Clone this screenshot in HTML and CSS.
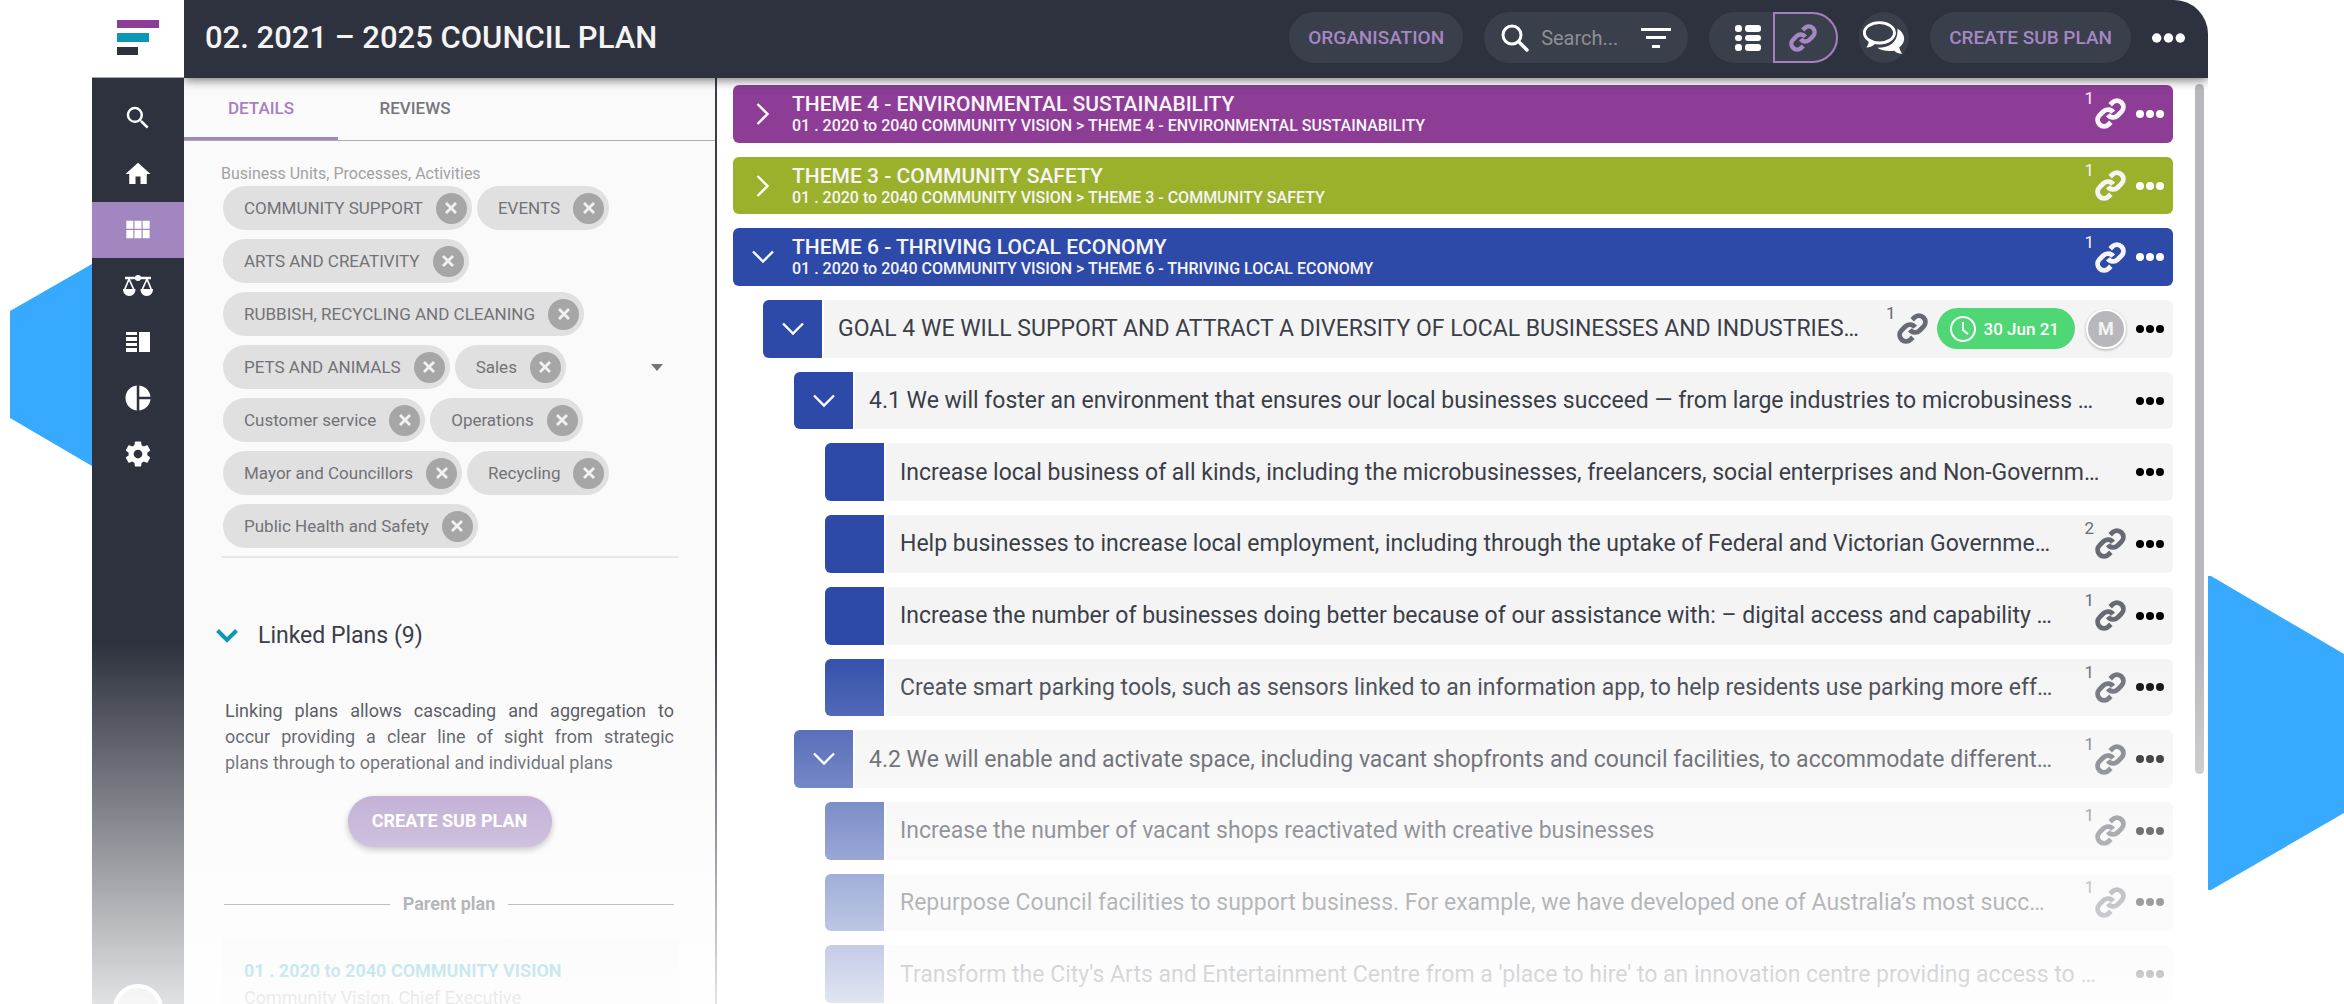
FILE: index.html
```html
<!DOCTYPE html>
<html lang="en">
<head>
  <meta charset="UTF-8">
  <meta name="viewport" content="width=device-width, initial-scale=1.0">
  <title>02. 2021 – 2025 Council Plan</title>
  <link rel="stylesheet" href="styles.css">
</head>
<body>
  <!-- shared icons -->
  <svg class="sprite" aria-hidden="true">
    <symbol id="i-link" viewBox="0 0 24 24"><path fill="none" stroke="currentColor" stroke-width="3.800" d="M10 13a5 5 0 0 0 7.540.54l3-3a5 5 0 0 0-7.070-7.070l-1.720 1.710M14 11a5 5 0 0 0-7.540-.54l-3 3a5 5 0 0 0 7.070 7.070l1.710-1.710"/></symbol>
    <symbol id="i-dots" viewBox="0 0 28 8"><g fill="currentColor"><circle cx="4" cy="4" r="4"/><circle cx="14" cy="4" r="4"/><circle cx="24" cy="4" r="4"/></g></symbol>
    <symbol id="i-down" viewBox="0 0 22 14"><path fill="none" stroke="currentColor" stroke-width="2.400" d="M1 1.500l10 10 10-10"/></symbol>
    <symbol id="i-right" viewBox="0 0 14 22"><path fill="none" stroke="currentColor" stroke-width="2.400" d="M1.500 1l10 10-10 10"/></symbol>
    <symbol id="i-close" viewBox="0 0 12 12"><path fill="none" stroke="currentColor" stroke-width="2.800" d="M1 1l10 10M11 1L1 11"/></symbol>
    <symbol id="i-search" viewBox="0 0 24 24"><path fill="currentColor" d="M15.500 14h-.79l-.28-.27A6.471 6.471 0 0 0 16 9.500 6.500 6.500 0 1 0 9.500 16c1.610 0 3.090-.59 4.230-1.570l.27.28v.79l5 4.990L20.490 19l-4.990-5zm-6 0C7.010 14 5 11.990 5 9.500S7.010 5 9.500 5 14 7.010 14 9.500 11.990 14 9.500 14z"/></symbol>
  </svg>

  <div class="shape shape-left"></div>
  <div class="shape shape-right"></div>

  <div class="app">
    <a class="logo" href="#" aria-label="Home page">
      <svg width="42" height="35" viewBox="0 0 42 35"><path fill="#8e3d96" d="M0 0h42v8H0z"/><path fill="#0a98b4" d="M0 13h32v9H0z"/><path fill="#2e323e" d="M0 27h21v8H0z"/></svg>
    </a>

    <header class="topbar">
      <h1>02. 2021 – 2025 COUNCIL PLAN</h1>
      <button class="pill">ORGANISATION</button>
      <div class="pill search">
        <svg width="28" height="28" viewBox="0 0 28 28"><circle cx="11" cy="11" r="9" fill="none" stroke="#fff" stroke-width="3"/><path d="M18 18l8 8" stroke="#fff" stroke-width="3.500" stroke-linecap="round"/></svg>
        <input type="text" placeholder="Search..." aria-label="Search">
        <button class="plain" aria-label="Filter">
          <svg width="30" height="20" viewBox="0 0 30 20"><path fill="#fff" d="M0 0h30v3H0zM5 8h20v3H5zM11 17h8v3h-8z"/></svg>
        </button>
      </div>
      <div class="switch">
        <button class="switch-list" aria-label="List view">
          <svg width="26" height="26" viewBox="0 0 26 26"><g fill="#fff"><rect width="7" height="7" rx="3"/><rect y="10" width="7" height="6" rx="3"/><rect y="19" width="7" height="7" rx="3"/><rect x="10" width="16" height="7" rx="3"/><rect x="10" y="10" width="16" height="6" rx="3"/><rect x="10" y="19" width="16" height="7" rx="3"/></g></svg>
        </button>
        <button class="switch-link" aria-label="Linked view"><svg width="28" height="28"><use href="#i-link"/></svg></button>
      </div>
      <button class="round" aria-label="Comments">
        <svg width="42" height="34" viewBox="67 61 128 104"><ellipse cx="117" cy="97" rx="46" ry="31" fill="none" stroke="#fff" stroke-width="9"/><path fill="#fff" d="M84 116c1 10-1 18-7 26 11 0 20-4 28-12zM172 84c27 17 26 43 6 57 1 8 4 14 9 20-11 0-19-3-25-9-20 2-38 0-52-9 38 1 66-18 62-59z"/></svg>
      </button>
      <button class="pill">CREATE SUB PLAN</button>
      <button class="plain" aria-label="More"><svg width="33" height="10"><use href="#i-dots"/></svg></button>
    </header>

    <nav class="sidebar">
      <a href="#" aria-label="Search"><svg width="30" height="30"><use href="#i-search"/></svg></a>
      <a href="#" aria-label="Home"><svg width="30" height="30" viewBox="0 0 24 24"><path fill="#fff" d="M10 20v-6h4v6h5v-8h3L12 3 2 12h3v8z"/></svg></a>
      <a href="#" class="active" aria-label="Plans"><svg width="28" height="28" viewBox="0 0 24 24"><path fill="#fff" d="M2 4h6v7H2zM9 4h6v7H9zM16 4h6v7h-6zM2 12h6v7H2zM9 12h6v7H9zM16 12h6v7h-6z"/></svg></a>
      <a href="#" aria-label="Compare"><svg width="30" height="22" viewBox="0 0 30 22"><path d="M2 3h26" stroke="#fff" stroke-width="2.500"/><circle cx="15" cy="3" r="3" fill="#fff"/><path d="M6 4L1.500 15M6 4l5 11M24 4l-5 11M24 4l4.500 11" stroke="#fff" stroke-width="1.700"/><path fill="#fff" d="M0 14h12.500c0 4-2.500 7-6.200 7S0 18 0 14zM17.500 14H30c0 4-2.500 7-6.300 7s-6.200-3-6.200-7z"/></svg></a>
      <a href="#" aria-label="Board"><svg width="24" height="20" viewBox="0 0 24 20"><path fill="#fff" d="M0 0h11v3H0zM0 5h11v4H0zM0 11h11v3H0zM0 16h11v4H0zM13 0h11v20H13z"/></svg></a>
      <a href="#" aria-label="Reports"><svg width="30" height="30" viewBox="0 0 24 24"><path fill="#fff" d="M11 2v20c-5.070-.5-9-4.790-9-10s3.930-9.500 9-10zm2.030 0v8.990H22c-.47-4.740-4.240-8.520-8.970-8.990zm0 11.010V22c4.740-.47 8.500-4.250 8.970-8.990h-8.970z"/></svg></a>
      <a href="#" aria-label="Settings"><svg width="30" height="30" viewBox="0 0 24 24"><path fill="#fff" d="M19.430 12.980c.04-.32.07-.64.07-.98s-.03-.66-.07-.98l2.110-1.650c.19-.15.24-.42.12-.64l-2-3.460c-.12-.22-.39-.3-.61-.22l-2.490 1c-.52-.4-1.080-.73-1.690-.98l-.38-2.650C14.460 2.180 14.250 2 14 2h-4c-.25 0-.46.18-.49.42l-.38 2.650c-.61.25-1.170.59-1.690.98l-2.490-1c-.23-.09-.49 0-.61.22l-2 3.460c-.13.22-.07.49.12.64l2.110 1.650c-.04.32-.07.65-.07.98s.03.66.07.98l-2.110 1.650c-.19.15-.24.42-.12.64l2 3.460c.12.22.39.3.61.22l2.490-1c.52.4 1.080.73 1.690.98l.38 2.650c.03.24.24.42.49.42h4c.25 0 .46-.18.49-.42l.38-2.650c.61-.25 1.170-.59 1.690-.98l2.490 1c.23.09.49 0 .61-.22l2-3.460c.12-.22.07-.49-.12-.64l-2.110-1.650zM12 15.500c-1.930 0-3.500-1.570-3.500-3.500s1.570-3.500 3.500-3.500 3.500 1.570 3.500 3.500-1.570 3.500-3.500 3.500z"/></svg></a>
      <button class="user" aria-label="Account"></button>
    </nav>

    <aside class="panel">
      <div class="tabs">
        <button class="tab selected">DETAILS</button>
        <button class="tab">REVIEWS</button>
      </div>

      <div class="field">
        <div class="field-label" id="units">Business Units, Processes, Activities</div>
        <div class="field-row">
          <ul class="chips" aria-labelledby="units">
            <li>COMMUNITY SUPPORT <button aria-label="Remove"><svg width="12" height="12"><use href="#i-close"/></svg></button></li>
            <li>EVENTS <button aria-label="Remove"><svg width="12" height="12"><use href="#i-close"/></svg></button></li>
            <li>ARTS AND CREATIVITY <button aria-label="Remove"><svg width="12" height="12"><use href="#i-close"/></svg></button></li>
            <li>RUBBISH, RECYCLING AND CLEANING <button aria-label="Remove"><svg width="12" height="12"><use href="#i-close"/></svg></button></li>
            <li>PETS AND ANIMALS <button aria-label="Remove"><svg width="12" height="12"><use href="#i-close"/></svg></button></li>
            <li>Sales <button aria-label="Remove"><svg width="12" height="12"><use href="#i-close"/></svg></button></li>
            <li>Customer service <button aria-label="Remove"><svg width="12" height="12"><use href="#i-close"/></svg></button></li>
            <li>Operations <button aria-label="Remove"><svg width="12" height="12"><use href="#i-close"/></svg></button></li>
            <li>Mayor and Councillors <button aria-label="Remove"><svg width="12" height="12"><use href="#i-close"/></svg></button></li>
            <li>Recycling <button aria-label="Remove"><svg width="12" height="12"><use href="#i-close"/></svg></button></li>
            <li>Public Health and Safety <button aria-label="Remove"><svg width="12" height="12"><use href="#i-close"/></svg></button></li>
          </ul>
          <button class="caret" aria-label="Open list"></button>
        </div>
      </div>

      <h2><svg width="22" height="14" viewBox="0 0 22 14"><path d="M1.500 1.500L11 11l9.500-9.500" fill="none" stroke="#0a98b4" stroke-width="4"/></svg>Linked Plans (9)</h2>
      <p class="intro">Linking plans allows cascading and aggregation to occur providing a clear line of sight from strategic plans&nbsp;through to operational and individual plans</p>
      <button class="create">CREATE SUB PLAN</button>
      <div class="divider">Parent plan</div>
      <div class="card">
        <a href="#">01 . 2020 to 2040 COMMUNITY VISION</a>
        <div>Community Vision, Chief Executive</div>
      </div>
    </aside>

    <main class="content">
      <ul class="tree">
        <li class="theme purple">
          <button class="toggle" aria-label="Expand"><svg width="14" height="22"><use href="#i-right"/></svg></button>
          <div class="text"><strong>THEME 4 - ENVIRONMENTAL SUSTAINABILITY</strong><small>01 . 2020 to 2040 COMMUNITY VISION &gt; THEME 4 - ENVIRONMENTAL SUSTAINABILITY</small></div>
          <a class="link" href="#"><sup>1</sup><svg width="31" height="31"><use href="#i-link"/></svg></a>
          <button class="more" aria-label="More"><svg width="28" height="8"><use href="#i-dots"/></svg></button>
        </li>
        <li class="theme green">
          <button class="toggle" aria-label="Expand"><svg width="14" height="22"><use href="#i-right"/></svg></button>
          <div class="text"><strong>THEME 3 - COMMUNITY SAFETY</strong><small>01 . 2020 to 2040 COMMUNITY VISION &gt; THEME 3 - COMMUNITY SAFETY</small></div>
          <a class="link" href="#"><sup>1</sup><svg width="31" height="31"><use href="#i-link"/></svg></a>
          <button class="more" aria-label="More"><svg width="28" height="8"><use href="#i-dots"/></svg></button>
        </li>
        <li class="theme blue">
          <button class="toggle" aria-label="Collapse"><svg width="22" height="14"><use href="#i-down"/></svg></button>
          <div class="text"><strong>THEME 6 - THRIVING LOCAL ECONOMY</strong><small>01 . 2020 to 2040 COMMUNITY VISION &gt; THEME 6 - THRIVING LOCAL ECONOMY</small></div>
          <a class="link" href="#"><sup>1</sup><svg width="31" height="31"><use href="#i-link"/></svg></a>
          <button class="more" aria-label="More"><svg width="28" height="8"><use href="#i-dots"/></svg></button>
        </li>
        <li class="level-1">
          <button class="toggle" aria-label="Collapse"><svg width="22" height="14"><use href="#i-down"/></svg></button>
          <div class="text">GOAL 4 WE WILL SUPPORT AND ATTRACT A DIVERSITY OF LOCAL BUSINESSES AND INDUSTRIES…</div>
          <a class="link" href="#"><sup>1</sup><svg width="31" height="31"><use href="#i-link"/></svg></a>
          <span class="date"><svg width="26" height="26" viewBox="0 0 26 26"><g fill="none" stroke="#fff" stroke-width="2"><circle cx="13" cy="13" r="12"/><path d="M13 6v8l5 4"/></g></svg>30 Jun 21</span>
          <span class="avatar">M</span>
          <button class="more" aria-label="More"><svg width="28" height="8"><use href="#i-dots"/></svg></button>
        </li>
        <li class="level-2">
          <button class="toggle" aria-label="Collapse"><svg width="22" height="14"><use href="#i-down"/></svg></button>
          <div class="text">4.1 We will foster an environment that ensures our local businesses succeed — from large industries to microbusiness …</div>
          <button class="more" aria-label="More"><svg width="28" height="8"><use href="#i-dots"/></svg></button>
        </li>
        <li class="level-3">
          <span class="toggle"></span>
          <div class="text">Increase local business of all kinds, including the microbusinesses, freelancers, social enterprises and Non-Governm…</div>
          <button class="more" aria-label="More"><svg width="28" height="8"><use href="#i-dots"/></svg></button>
        </li>
        <li class="level-3">
          <span class="toggle"></span>
          <div class="text">Help businesses to increase local employment, including through the uptake of Federal and Victorian Governme…</div>
          <a class="link" href="#"><sup>2</sup><svg width="31" height="31"><use href="#i-link"/></svg></a>
          <button class="more" aria-label="More"><svg width="28" height="8"><use href="#i-dots"/></svg></button>
        </li>
        <li class="level-3">
          <span class="toggle"></span>
          <div class="text">Increase the number of businesses doing better because of our assistance with: – digital access and capability …</div>
          <a class="link" href="#"><sup>1</sup><svg width="31" height="31"><use href="#i-link"/></svg></a>
          <button class="more" aria-label="More"><svg width="28" height="8"><use href="#i-dots"/></svg></button>
        </li>
        <li class="level-3">
          <span class="toggle"></span>
          <div class="text">Create smart parking tools, such as sensors linked to an information app, to help residents use parking more eff…</div>
          <a class="link" href="#"><sup>1</sup><svg width="31" height="31"><use href="#i-link"/></svg></a>
          <button class="more" aria-label="More"><svg width="28" height="8"><use href="#i-dots"/></svg></button>
        </li>
        <li class="level-2">
          <button class="toggle" aria-label="Collapse"><svg width="22" height="14"><use href="#i-down"/></svg></button>
          <div class="text">4.2 We will enable and activate space, including vacant shopfronts and council facilities, to accommodate different…</div>
          <a class="link" href="#"><sup>1</sup><svg width="31" height="31"><use href="#i-link"/></svg></a>
          <button class="more" aria-label="More"><svg width="28" height="8"><use href="#i-dots"/></svg></button>
        </li>
        <li class="level-3">
          <span class="toggle"></span>
          <div class="text">Increase the number of vacant shops reactivated with creative businesses</div>
          <a class="link" href="#"><sup>1</sup><svg width="31" height="31"><use href="#i-link"/></svg></a>
          <button class="more" aria-label="More"><svg width="28" height="8"><use href="#i-dots"/></svg></button>
        </li>
        <li class="level-3">
          <span class="toggle"></span>
          <div class="text">Repurpose Council facilities to support business. For example, we have developed one of Australia’s most succ…</div>
          <a class="link" href="#"><sup>1</sup><svg width="31" height="31"><use href="#i-link"/></svg></a>
          <button class="more" aria-label="More"><svg width="28" height="8"><use href="#i-dots"/></svg></button>
        </li>
        <li class="level-3">
          <span class="toggle"></span>
          <div class="text">Transform the City's Arts and Entertainment Centre from a 'place to hire' to an innovation centre providing access to …</div>
          <button class="more" aria-label="More"><svg width="28" height="8"><use href="#i-dots"/></svg></button>
        </li>
      </ul>
      <div class="scrollbar"><div class="thumb"></div></div>
    </main>

    <div class="fade"></div>
  </div>
</body>
</html>
```
FILE: styles.css
```css
* {
  box-sizing: border-box;
}
body {
  margin: 0;
  background: #fff;
  color: #3a3e49;
  font-family: Roboto, sans-serif;
  overflow: hidden;
}
button {
  border: none;
  padding: 0;
  background: none;
  color: inherit;
  font: inherit;
  cursor: pointer;
}
a {
  color: inherit;
  text-decoration: none;
}
ul {
  list-style: none;
  margin: 0;
  padding: 0;
}
svg {
  display: block;
  flex: none;
}
.sprite {
  position: absolute;
  width: 0;
  height: 0;
}

/* blue shapes behind the app */
.shape {
  position: absolute;
  background: #37a9ff;
}
.shape-left {
  left: 10px;
  top: 264px;
  width: 82px;
  height: 202px;
  clip-path: polygon(0 47px, 100% 0, 100% 100%, 0 154px);
}
.shape-right {
  right: 0;
  top: 576px;
  width: 136px;
  height: 314px;
  clip-path: polygon(0 0, 3px 0, 100% 78px, 100% 237px, 3px 100%, 0 100%);
}

.app {
  position: relative;
  display: grid;
  grid-template-columns: 92px 533px minmax(0, 1fr);
  grid-template-rows: 78px minmax(0, 1fr);
  height: 100vh;
  margin: 0 136px 0 92px;
  overflow: hidden;
  background: #fff;
  border-radius: 34px 34px 0 0;
}
.logo {
  display: flex;
  align-items: center;
  justify-content: center;
  padding-bottom: 2px;
  border-bottom: 1px solid #a5a6ab;
}

/* top bar */
.topbar {
  grid-column: 2 / 4;
  z-index: 1;
  display: flex;
  align-items: center;
  gap: 21px;
  padding: 0 23px 3px 21px;
  background: #2e323e;
  box-shadow: 0 2px 10px rgba(0, 0, 0, 0.55);
  clip-path: inset(0 0 -20px 0);
}
.topbar h1 {
  flex: 1;
  margin: 0;
  color: #f4f4f4;
  font-size: 31px;
  font-weight: 500;
}
.pill {
  height: 51px;
  padding: 0 19px;
  border-radius: 26px;
  background: #3a3f4c;
  color: #a587c4;
  font-size: 19px;
  font-weight: 500;
}
.plain {
  color: #fff;
}
.search {
  display: flex;
  align-items: center;
  gap: 12px;
  width: 204px;
  padding: 0 17px;
}
.search input {
  flex: 1;
  min-width: 0;
  padding: 0;
  border: none;
  background: none;
  color: #fff;
  font: 20px Roboto, sans-serif;
}
.search input::placeholder {
  color: #8d8f95;
}
.switch {
  display: flex;
  height: 51px;
  border-radius: 26px;
  background: #3a3f4c;
}
.switch-list {
  padding: 0 12px 0 26px;
}
.switch-link {
  width: 65px;
  padding-left: 14px;
  border: 2px solid #a67fc0;
  border-radius: 0 26px 26px 0;
  color: #a587c4;
}
.round {
  display: flex;
  align-items: center;
  justify-content: center;
  width: 50px;
  height: 51px;
  border-radius: 50%;
  background: #3a3f4c;
}

/* sidebar */
.sidebar {
  display: flex;
  flex-direction: column;
  padding-top: 12px;
  background: #2e323e;
  color: #fff;
}
.sidebar a {
  display: flex;
  align-items: center;
  justify-content: center;
  height: 56px;
}
.sidebar a.active {
  background: #a186c0;
}
.user {
  flex: none;
  align-self: center;
  width: 50px;
  height: 50px;
  margin: auto 0 -30px;
  border: 4px solid #fff;
  border-radius: 50%;
  background: #c3c3c6;
}

/* details panel */
.panel {
  overflow: hidden;
  border-right: 2px solid #3b3f4d;
  background: #fafafa;
}
.tabs {
  display: flex;
  height: 63px;
  border-bottom: 1px solid #adadad;
}
.tab {
  width: 154px;
  border-bottom: 3px solid transparent;
  color: #77777b;
  font-size: 17px;
  font-weight: 500;
}
.tab.selected {
  border-color: #a186c0;
  color: #a67fc0;
}
.field {
  margin: 0 36px 0 37px;
  padding: 22px 0 8px;
  border-bottom: 2px solid #e8e8e8;
}
.field-label {
  color: #a2a2a4;
  font-size: 16px;
  line-height: 22px;
}
.field-row {
  display: flex;
  align-items: center;
  padding-top: 1px;
}
.chips {
  flex: 1;
  display: flex;
  flex-wrap: wrap;
  gap: 9px 5px;
  padding-left: 2px;
}
.chips li {
  display: flex;
  align-items: center;
  gap: 13px;
  height: 44px;
  padding: 0 5px 0 21px;
  border-radius: 22px;
  background: #e0e0e0;
  color: #727277;
  font-size: 17px;
}
.chips button {
  display: flex;
  align-items: center;
  justify-content: center;
  width: 31px;
  height: 31px;
  border-radius: 50%;
  background: #a6a6a6;
  color: #f2f2f2;
}
.caret {
  margin: 0 16px;
  border: 6px solid transparent;
  border-top: 7px solid #747478;
  border-bottom: none;
}
.panel h2 {
  display: flex;
  align-items: center;
  gap: 20px;
  margin: 63px 0 0 32px;
  font-size: 23px;
  font-weight: 400;
  line-height: 30px;
}
.intro {
  margin: 47px 41px 0;
  font-size: 18px;
  line-height: 26px;
  text-align: justify;
}
.create {
  display: block;
  width: 204px;
  height: 51px;
  margin: 20px auto 0;
  padding-bottom: 2px;
  border-radius: 26px;
  background: #a186c0;
  box-shadow: 0 3px 6px rgba(0, 0, 0, 0.4);
  color: #fff;
  font-size: 18px;
  font-weight: 700;
}
.divider {
  display: flex;
  align-items: center;
  gap: 13px;
  margin: 45px 41px 0 40px;
  font-size: 18px;
  font-weight: 700;
  line-height: 24px;
}
.divider::before,
.divider::after {
  content: "";
  flex: 1;
  border-top: 1px solid #55575f;
}
.card {
  margin: 22px 36px 0 38px;
  padding: 19px 22px;
  background: #f4f4f4;
  color: #77777b;
  font-size: 18px;
  line-height: 27px;
}
.card a {
  color: #0a98b4;
  font-weight: 700;
}

/* plan tree */
.content {
  display: flex;
  min-width: 0;
}
.tree {
  flex: 1;
  display: grid;
  grid-auto-rows: minmax(0, 1fr);
  gap: 14px;
  min-width: 0;
  padding: 7px 0 1px 16px;
}
.tree li {
  display: flex;
  align-items: center;
  min-width: 0;
  padding-right: 9px;
  border-radius: 6px;
  background: #f4f4f4;
}
.tree .level-1 {
  margin-left: 30px;
}
.tree .level-2 {
  margin-left: 61px;
}
.tree .level-3 {
  margin-left: 92px;
}
.tree .purple {
  background: #8e3d96;
}
.tree .green {
  background: #9bb12c;
}
.tree .blue {
  background: #2d4aa8;
}
.toggle {
  flex: none;
  display: flex;
  align-items: center;
  justify-content: center;
  align-self: stretch;
  width: 61px;
  border-right: 2px solid #fff;
  border-radius: 6px 0 0 6px;
  background: #2d4aa8;
  color: #fff;
}
.text {
  flex: 1;
  min-width: 0;
  padding-left: 14px;
  overflow: hidden;
  font-size: 23px;
  white-space: nowrap;
}
.theme {
  color: #f7f4f8;
}
.theme .toggle {
  width: 59px;
  border: none;
  background: none;
}
.theme .text {
  padding: 0;
}
.theme strong,
.theme small {
  display: block;
  font-size: 21px;
  font-weight: 500;
  line-height: 24px;
}
.theme small {
  font-size: 16px;
  line-height: 20px;
}
.link {
  display: flex;
  align-items: center;
  gap: 1px;
  margin-left: 8px;
  color: #666a73;
}
.theme .link {
  color: #f7f4f8;
}
.link sup {
  align-self: flex-start;
  margin-top: -8px;
  font-size: 17px;
  line-height: 17px;
}
.more {
  margin-left: 10px;
  color: #000;
}
.theme .more {
  color: #fff;
}
.date {
  display: flex;
  align-items: center;
  gap: 8px;
  height: 41px;
  margin-left: 9px;
  padding: 0 16px 0 13px;
  border-radius: 21px;
  background: #4fd675;
  color: #fff;
  font-size: 17px;
  font-weight: 500;
}
.avatar {
  display: flex;
  align-items: center;
  justify-content: center;
  width: 40px;
  height: 40px;
  margin-left: 11px;
  border: 2px solid #fff;
  border-radius: 50%;
  background: #b8b8bc;
  box-shadow: 0 1px 3px rgba(0, 0, 0, 0.3);
  color: #f4f4f4;
  font-size: 18px;
  font-weight: 700;
}
.scrollbar {
  flex: none;
  width: 9px;
  margin: 6px 4px 0 22px;
}
.thumb {
  height: 75%;
  border-radius: 5px;
  background: #b8b8bc;
}

/* the app fades out towards the bottom */
.fade {
  position: absolute;
  inset: 64% 0 0;
  z-index: 2;
  background: linear-gradient(rgba(255, 255, 255, 0), rgba(255, 255, 255, 0.86));
  pointer-events: none;
}
```
